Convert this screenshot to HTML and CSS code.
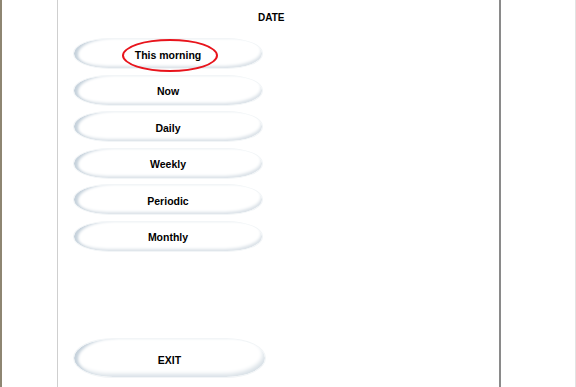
FILE: index.html
```html
<!DOCTYPE html>
<html>
<head>
<meta charset="utf-8">
<link rel="stylesheet" href="styles.css">
</head>
<body>
<div class="frame">
  <div class="side-left"></div>
  <div class="main">
    <div class="title">DATE</div>
    <div class="menu">
      <div class="pill">This morning<span class="mark"></span></div>
      <div class="pill">Now</div>
      <div class="pill">Daily</div>
      <div class="pill">Weekly</div>
      <div class="pill">Periodic</div>
      <div class="pill">Monthly</div>
    </div>
    <div class="pill exit">EXIT</div>
  </div>
  <div class="side-right"></div>
</div>
</body>
</html>
```
FILE: styles.css
```css
html, body {
  margin: 0;
  padding: 0;
  background: #fff;
}
body {
  font-family: "Liberation Sans", Arial, sans-serif;
  color: #000;
}
.frame {
  display: flex;
  height: 387px;
  width: 576px;
  box-sizing: border-box;
  border-left: 2px solid #8e8672;
  border-right: 1px solid #e2e2e2;
}
.side-left {
  width: 55px;
  border-right: 1px solid #cfcfcf;
}
.main {
  width: 441px;
  display: flex;
  flex-direction: column;
  padding: 12px 0 9px 15px;
  box-sizing: border-box;
}
.side-right {
  flex: 1;
  border-left: 2px solid #8a8a8a;
}
.title {
  font-size: 10px;
  font-weight: bold;
  line-height: 12px;
  padding-left: 185px;
  margin-bottom: 14px;
}
.menu {
  display: flex;
  flex-direction: column;
  gap: 5.5px;
}
.pill {
  position: relative;
  width: 190px;
  height: 31px;
  box-sizing: border-box;
  border-radius: 36px / 15px;
  background: #fff;
  border: 1px solid #f2f5f7;
  box-shadow: inset 6px 1px 3px -2px #c6d2dc, inset -2px -3px 3px -1px #dbe2e8;
  display: flex;
  align-items: center;
  justify-content: center;
  font-size: 10.5px;
  font-weight: bold;
  padding-top: 2px;
}
.pill.exit {
  margin-top: auto;
  height: 40px;
  width: 193px;
  border-radius: 40px / 20px;
  padding-top: 3px;
  box-shadow: inset 6px 1px 3px -2px #c6d2dc, inset -3px -4px 4px -1px #d9e1e7;
}
.mark {
  position: absolute;
  left: 48px;
  top: 0px;
  width: 92px;
  height: 29px;
  border: 2.5px solid #e8141c;
  border-radius: 50%;
}
```
